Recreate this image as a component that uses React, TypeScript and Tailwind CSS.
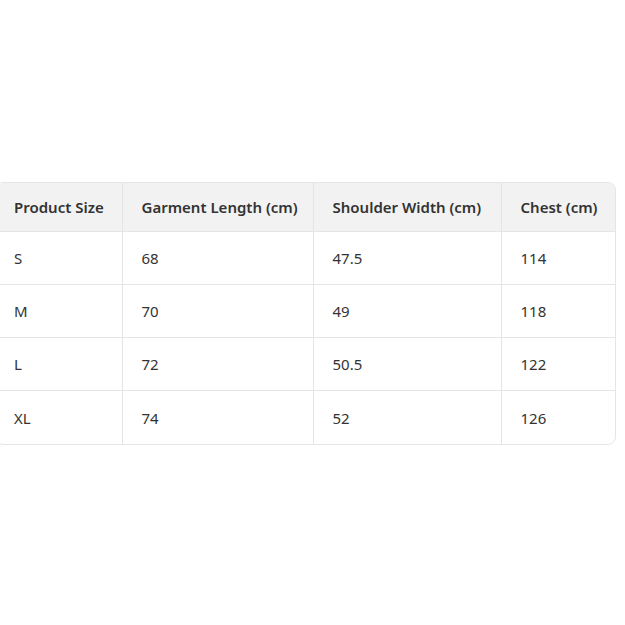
import React from 'react';

const rows = [
  ['S', '68', '47.5', '114'],
  ['M', '70', '49', '118'],
  ['L', '72', '50.5', '122'],
  ['XL', '74', '52', '126'],
];

const headers = ['Product Size', 'Garment Length (cm)', 'Shoulder Width (cm)', 'Chest (cm)'];
const widths = ['w-[126px]', 'w-[191px]', 'w-[188px]', 'w-[115px]'];

const App: React.FC = () => {
  return (
    <div className="w-[625px] h-[625px] bg-white flex items-center overflow-hidden" style={{ fontFamily: '"Noto Sans", sans-serif' }}>
      <div className="ml-[-5px] mt-[1px] w-[621px] shrink-0 border border-[#e5e5e5] rounded-lg overflow-hidden">
        <table className="w-full border-collapse table-fixed text-[15px] text-[#333]">
          <thead>
            <tr className="bg-[#f2f2f2] h-[49px]">
              {headers.map((h, i) => (
                <th
                  key={h}
                  className={`${widths[i]} text-left font-semibold pr-2 ${i > 0 ? 'pl-[19px] border-l border-[#e5e5e5]' : 'pl-[18px]'}`}
                >
                  {h}
                </th>
              ))}
            </tr>
          </thead>
          <tbody>
            {rows.map((r, ri) => (
              <tr key={ri} className="h-[53px] border-t border-[#e5e5e5]">
                {r.map((c, ci) => (
                  <td key={ci} className={`pr-2 pt-[1px] font-normal ${ci > 0 ? 'pl-[19px] border-l border-[#e5e5e5]' : 'pl-[18px]'}`}>
                    {c}
                  </td>
                ))}
              </tr>
            ))}
          </tbody>
        </table>
      </div>
    </div>
  );
};

export default App;
